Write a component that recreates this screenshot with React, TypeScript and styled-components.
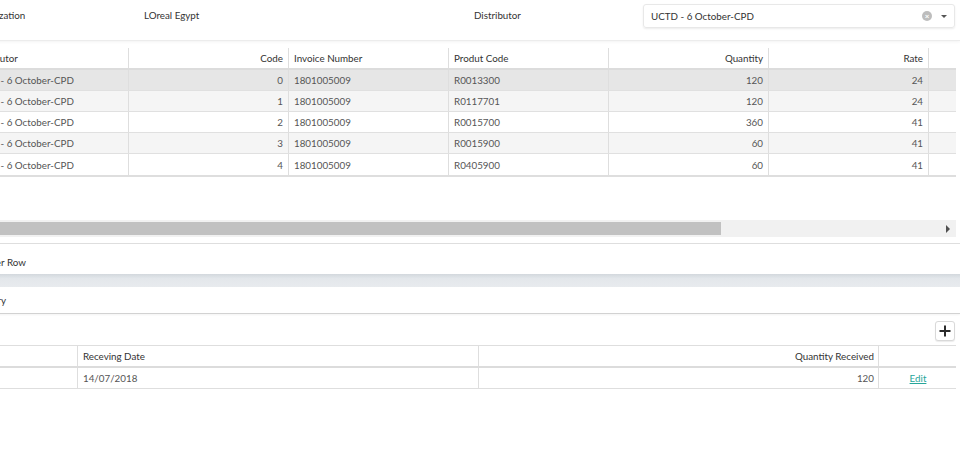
import styled, { createGlobalStyle } from "styled-components";

const GlobalStyle = createGlobalStyle`
  html, body {
    margin: 0;
    padding: 0;
    background: #ffffff;
    overflow: hidden;
  }
  body {
    font-family: Lato, "Open Sans", "Liberation Sans", sans-serif;
    font-size: 9.8px;
    color: #333;
  }
`;

interface InvoiceRow {
  distributor: string;
  code: number;
  invoice: string;
  product: string;
  quantity: number;
  rate: number;
}

const rows: InvoiceRow[] = [
  { distributor: "UCTD - 6 October-CPD", code: 0, invoice: "1801005009", product: "R0013300", quantity: 120, rate: 24 },
  { distributor: "UCTD - 6 October-CPD", code: 1, invoice: "1801005009", product: "R0117701", quantity: 120, rate: 24 },
  { distributor: "UCTD - 6 October-CPD", code: 2, invoice: "1801005009", product: "R0015700", quantity: 360, rate: 41 },
  { distributor: "UCTD - 6 October-CPD", code: 3, invoice: "1801005009", product: "R0015900", quantity: 60, rate: 41 },
  { distributor: "UCTD - 6 October-CPD", code: 4, invoice: "1801005009", product: "R0405900", quantity: 60, rate: 41 },
];

// page is scrolled sideways a little, so its left edge sits off screen
const Page = styled.div`
  width: 1008px;
  margin-left: -48px;
`;

const FilterBar = styled.div`
  display: grid;
  grid-template-columns: 174px 330px 169px 1fr;
  align-items: center;
  height: 41px;
  box-sizing: border-box;
  padding: 4px 5px 12px 18px;
  border-bottom: 1px solid #ececec;
  box-shadow: 0 1px 3px rgba(0, 0, 0, 0.05);
`;

const FieldText = styled.span`
  color: #333;
  margin-top: -2px;
`;

const SelectBox = styled.div`
  display: flex;
  align-items: center;
  height: 24px;
  box-sizing: border-box;
  padding: 0 7px 0 7px;
  border: 1px solid #e8e8e8;
  border-radius: 3px;
  box-shadow: 0 1px 2px rgba(0, 0, 0, 0.08);
  color: #333;
`;

const SelectValue = styled.span`
  flex: 1;
`;

const ClearIcon = styled.span`
  width: 10px;
  height: 10px;
  border-radius: 50%;
  background: #bdbdbd;
  color: #fff;
  font-size: 8px;
  line-height: 10px;
  text-align: center;
  font-weight: 700;
  margin-right: 9px;
`;

const Caret = styled.span`
  width: 0;
  height: 0;
  border-left: 3px solid transparent;
  border-right: 3px solid transparent;
  border-top: 3px solid #555;
`;

const GridViewport = styled.div`
  margin: 7px 4px 0 17px;
  overflow: hidden;
  border-bottom: 2px solid #dedede;
`;

const GridRow = styled.div<{ $tone?: "head" | "active" | "alt" | "plain" }>`
  display: grid;
  grid-template-columns: repeat(7, 160px);
  height: ${(p) => (p.$tone === "head" ? "22px" : "21px")};
  box-sizing: border-box;
  border-bottom: ${(p) =>
    p.$tone === "head" ? "2px solid #dcdcdc" : "1px solid #e0e0e0"};
  background: ${(p) =>
    p.$tone === "active" ? "#e6e6e6" : p.$tone === "alt" ? "#f5f5f5" : "#ffffff"};
  &:last-child {
    border-bottom: none;
  }
`;

const Cell = styled.div<{ $align?: "left" | "right" | "center"; $head?: boolean }>`
  display: flex;
  align-items: center;
  justify-content: ${(p) =>
    p.$align === "right" ? "flex-end" : p.$align === "center" ? "center" : "flex-start"};
  padding: 0 5px;
  border-right: 1px solid #dedede;
  color: ${(p) => (p.$head ? "#333" : "#555")};
  white-space: nowrap;
  overflow: hidden;
  &:first-child {
    padding-left: 2px;
  }
`;

const ScrollBar = styled.div`
  display: flex;
  height: 17px;
  margin: 43px 4px 0 17px;
  background: #f1f1f1;
`;

const ScrollButton = styled.div<{ $dir: "left" | "right" }>`
  width: 17px;
  display: flex;
  align-items: center;
  justify-content: center;
  &::after {
    content: "";
    width: 0;
    height: 0;
    border-top: 4px solid transparent;
    border-bottom: 4px solid transparent;
    ${(p) => (p.$dir === "right" ? "border-left: 4px solid #505050;" : "border-right: 4px solid #505050;")}
  }
`;

const Trough = styled.div`
  flex: 1;
  padding: 2px 0;
`;

const Thumb = styled.div`
  height: 100%;
  background: #c1c1c1;
`;

const OptionRow = styled.div`
  margin-top: 6px;
  height: 31px;
  box-sizing: border-box;
  border-top: 1px solid #dedede;
  display: flex;
  align-items: center;
  padding: 5px 0 0 4px;
  color: #333;
`;

const Divider = styled.div`
  height: 13px;
  background: linear-gradient(#d3d8dd, #e3e7eb 35%, #e8ebee);
`;

const SectionHeader = styled.div`
  height: 27px;
  box-sizing: border-box;
  display: flex;
  align-items: center;
  padding-left: 18px;
  color: #333;
  border-bottom: 1px solid #d2d2d2;
  box-shadow: 0 1px 2px rgba(0, 0, 0, 0.05);
`;

const Toolbar = styled.div`
  display: flex;
  justify-content: flex-end;
  padding: 7px 5px 4px 0;
`;

const AddButton = styled.button`
  width: 20px;
  height: 20px;
  padding: 0;
  display: flex;
  align-items: center;
  justify-content: center;
  background: #fff;
  border: 1px solid #d9d9d9;
  border-radius: 3px;
  box-shadow: 0 1px 1px rgba(0, 0, 0, 0.08);
`;

const HistoryTable = styled.div`
  margin: 0 4px 0 17px;
  border-top: 1px solid #dedede;
`;

const HistoryRow = styled.div<{ $head?: boolean }>`
  display: grid;
  grid-template-columns: 109px 401px 400px 77px;
  height: ${(p) => (p.$head ? "22px" : "21px")};
  box-sizing: border-box;
  border-bottom: ${(p) => (p.$head ? "2px solid #dcdcdc" : "1px solid #dedede")};
`;

const HistoryCell = styled(Cell)`
  padding: 0 4px 0 5px;
  &:first-child {
    padding-left: 5px;
  }
  &:last-child {
    border-right: none;
  }
`;

const EditLink = styled.a`
  color: #26a69a;
  text-decoration: underline;
  cursor: pointer;
`;

export default function App() {
  return (
    <>
      <GlobalStyle />
      <Page>
        <FilterBar>
          <FieldText>Organization</FieldText>
          <FieldText>LOreal Egypt</FieldText>
          <FieldText>Distributor</FieldText>
          <SelectBox>
            <SelectValue>UCTD - 6 October-CPD</SelectValue>
            <ClearIcon>×</ClearIcon>
            <Caret />
          </SelectBox>
        </FilterBar>

        <GridViewport>
          <GridRow $tone="head">
            <Cell $head>Distributor</Cell>
            <Cell $head $align="right">Code</Cell>
            <Cell $head>Invoice Number</Cell>
            <Cell $head>Produt Code</Cell>
            <Cell $head $align="right">Quantity</Cell>
            <Cell $head $align="right">Rate</Cell>
            <Cell $head />
          </GridRow>
          {rows.map((r, i) => (
            <GridRow key={r.code} $tone={i === 0 ? "active" : i % 2 === 1 ? "alt" : "plain"}>
              <Cell>{r.distributor}</Cell>
              <Cell $align="right">{r.code}</Cell>
              <Cell>{r.invoice}</Cell>
              <Cell>{r.product}</Cell>
              <Cell $align="right">{r.quantity}</Cell>
              <Cell $align="right">{r.rate}</Cell>
              <Cell />
            </GridRow>
          ))}
        </GridViewport>

        <ScrollBar>
          <ScrollButton $dir="left" />
          <Trough>
            <Thumb style={{ width: 735 }} />
          </Trough>
          <ScrollButton $dir="right" />
        </ScrollBar>

        <OptionRow>Show Filter Row</OptionRow>
        <Divider />
        <SectionHeader>Delivery</SectionHeader>

        <Toolbar>
          <AddButton aria-label="Add">
            <svg width="12" height="12" viewBox="0 0 12 12">
              <path d="M6 0.5v11M0.5 6h11" stroke="#2b2b2b" strokeWidth="2" />
            </svg>
          </AddButton>
        </Toolbar>

        <HistoryTable>
          <HistoryRow $head>
            <HistoryCell $head />
            <HistoryCell $head>Receving Date</HistoryCell>
            <HistoryCell $head $align="right">Quantity Received</HistoryCell>
            <HistoryCell $head />
          </HistoryRow>
          <HistoryRow>
            <HistoryCell />
            <HistoryCell>14/07/2018</HistoryCell>
            <HistoryCell $align="right">120</HistoryCell>
            <HistoryCell $align="center">
              <EditLink>Edit</EditLink>
            </HistoryCell>
          </HistoryRow>
        </HistoryTable>
      </Page>
    </>
  );
}
